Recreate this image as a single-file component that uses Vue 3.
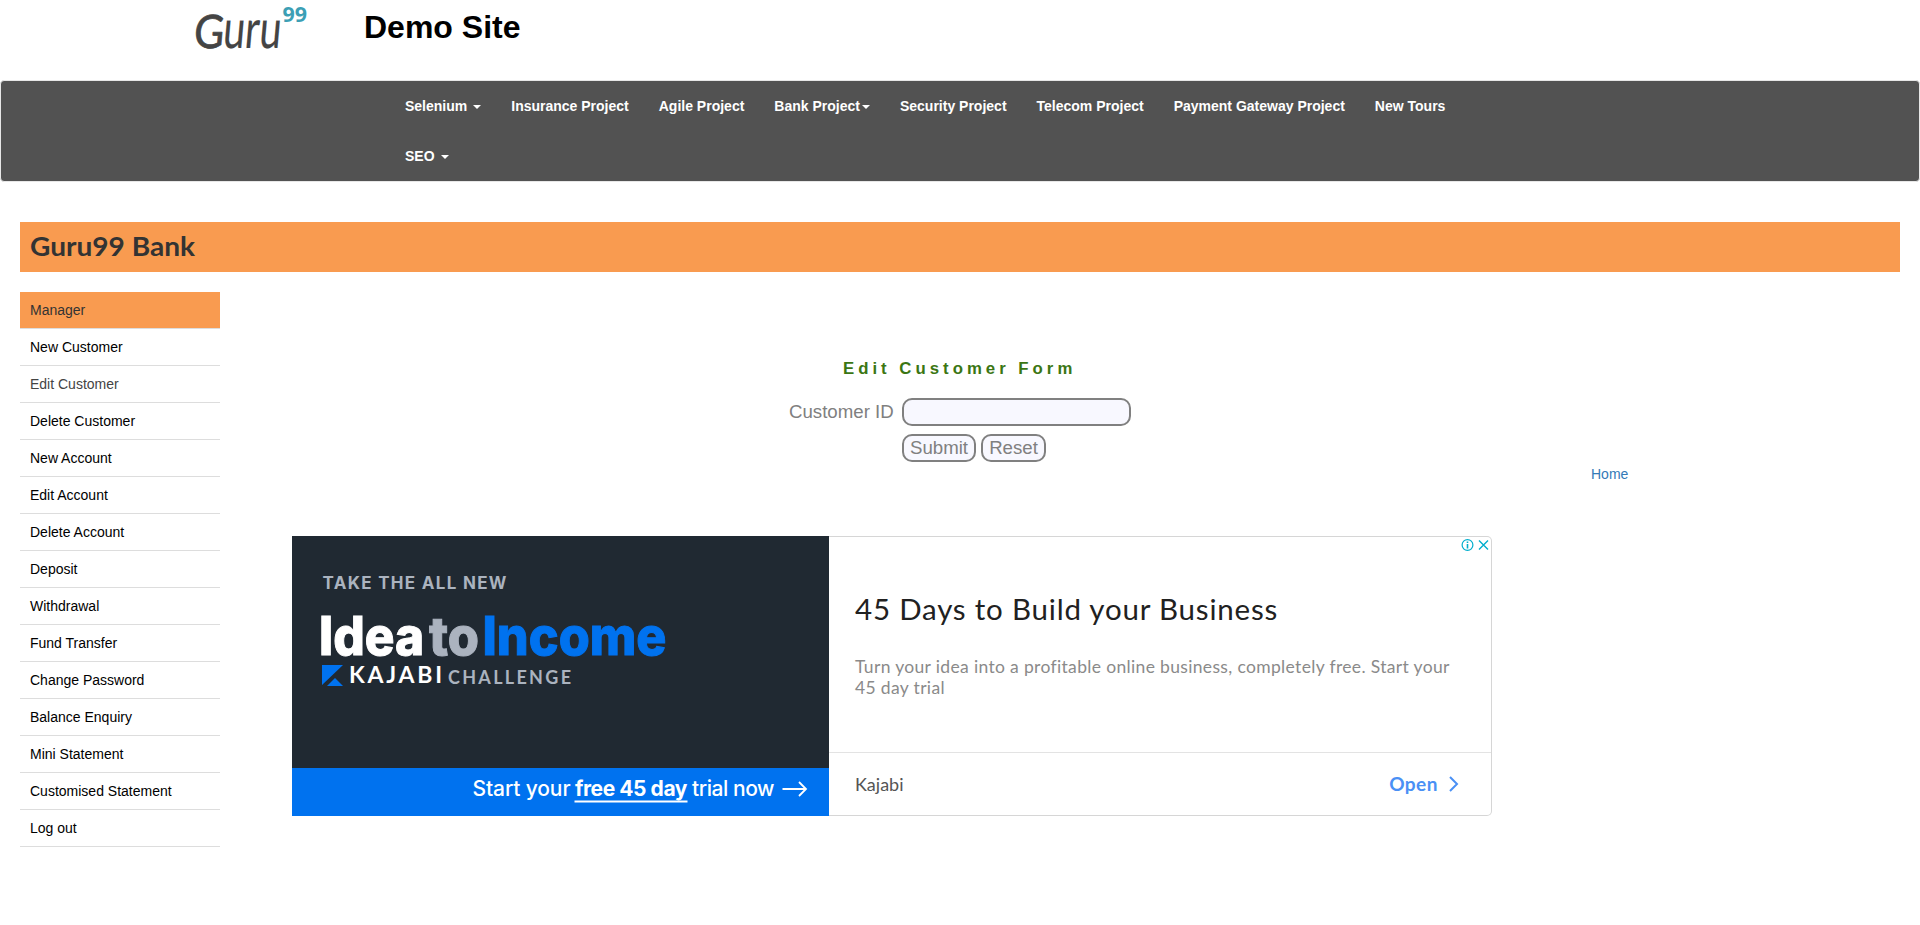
<script setup>
const nav = [
  { label: 'Selenium', caret: true, spaced: true },
  { label: 'Insurance Project' },
  { label: 'Agile Project' },
  { label: 'Bank Project', caret: true },
  { label: 'Security Project' },
  { label: 'Telecom Project' },
  { label: 'Payment Gateway Project' },
  { label: 'New Tours' },
  { label: 'SEO', caret: true, spaced: true },
]
const menu = [
  'Manager', 'New Customer', 'Edit Customer', 'Delete Customer', 'New Account',
  'Edit Account', 'Delete Account', 'Deposit', 'Withdrawal', 'Fund Transfer',
  'Change Password', 'Balance Enquiry', 'Mini Statement', 'Customised Statement', 'Log out',
]
</script>

<template>
  <div class="page">
    <header class="top">
      <svg class="logo" width="120" height="62" viewBox="0 0 120 62" role="img" aria-label="Guru99">
        <g class="logo-name" transform="translate(1 48) skewX(-5)">
          <text class="cap" x="0" y="0" textLength="30" lengthAdjust="spacingAndGlyphs">G</text>
          <text class="low" x="29" y="0" textLength="58" lengthAdjust="spacingAndGlyphs">uru</text>
        </g>
        <text class="logo-num" x="90.500" y="22" textLength="24.500" lengthAdjust="spacingAndGlyphs">99</text>
      </svg>
      <h2 class="site-title">Demo Site</h2>
    </header>

    <nav class="navbar">
      <ul class="nav-list">
        <li v-for="n in nav" :key="n.label">
          <a>{{ n.label }}<b v-if="n.caret" class="caret" :class="{ spaced: n.spaced }"></b></a>
        </li>
      </ul>
    </nav>

    <div class="bank">
      <svg width="200" height="50" viewBox="0 0 200 50">
        <text class="bank-name" x="10" y="33.500" textLength="165" lengthAdjust="spacingAndGlyphs">Guru99 Bank</text>
      </svg>
    </div>

    <div class="body">
      <ul class="side">
        <li v-for="(m, i) in menu" :key="m" :class="{ active: i === 0, visited: i === 2 }"><a>{{ m }}</a></li>
      </ul>

      <main class="main">
        <form class="form" @submit.prevent>
          <p class="heading">Edit Customer Form</p>
          <div class="row">
            <label for="cid">Customer ID</label>
            <input id="cid" class="field" type="text" />
          </div>
          <div class="row buttons">
            <button class="btn submit" type="submit">Submit</button>
            <button class="btn reset" type="reset">Reset</button>
          </div>
        </form>
        <a class="home">Home</a>

        <section class="ad">
          <svg class="banner" width="537" height="280" viewBox="0 0 537 280">
            <rect width="537" height="280" fill="#202932" />
            <rect y="232" width="537" height="48" fill="#0072ef" />
            <text x="30.5" y="53" font-size="17" font-weight="700" fill="#abb3bf" textLength="184">TAKE THE ALL NEW</text>
            <g font-size="53" font-weight="800" stroke-width="1">
              <text x="27" y="119" fill="#fff" stroke="#fff" textLength="105" lengthAdjust="spacingAndGlyphs">Idea</text>
              <text x="137" y="119" fill="#abb3bf" stroke="#abb3bf" textLength="50" lengthAdjust="spacingAndGlyphs">to</text>
              <text x="190.500" y="119" fill="#0072ef" stroke="#0072ef" textLength="184" lengthAdjust="spacingAndGlyphs">Income</text>
            </g>
            <path d="M30 129h21L30 149zM35 150l8-8 8 8z" fill="#0072ef" />
            <text class="sans" x="57" y="147" font-size="23" font-weight="700" fill="#fff" textLength="93">KAJABI</text>
            <text class="sans" x="156" y="147.500" font-size="18" font-weight="700" fill="#abb3bf" textLength="123">CHALLENGE</text>
            <g font-size="21" fill="#fff">
              <text x="180.500" y="260" font-weight="500" textLength="98">Start your</text>
              <text x="283" y="260" font-weight="700" textLength="112.500">free 45 day</text>
              <text x="400" y="260" font-weight="500" textLength="82.500">trial now</text>
            </g>
            <path d="M282.500 265.500h113" stroke="#fff" stroke-width="2" />
            <path d="M490.500 253h23M507 246l7 7-7 7" fill="none" stroke="#fff" stroke-width="1.800" />
          </svg>
          <div class="card">
            <svg class="choices" width="30" height="14" viewBox="0 0 30 14" fill="none" stroke="#00aecd">
              <circle cx="7.500" cy="7" r="5.400" stroke-width="1.200" />
              <path d="M7.500 6v4.500M7.500 3.500v1.500" stroke-width="1.600" />
              <path d="M19 2.500l9 9M28 2.500l-9 9" stroke-width="1.400" />
            </svg>
            <div class="copy">
              <h3><span>45 Days to Build your Business</span></h3>
              <p>Turn your idea into a profitable online business, completely free. Start your<br />45 day trial</p>
            </div>
            <div class="foot">
              <span class="brand">Kajabi</span>
              <span class="open">Open
                <svg width="12" height="18" viewBox="0 0 12 18" fill="none" stroke="#4a90f5" stroke-width="2"><path d="M2 2l7 7-7 7" /></svg>
              </span>
            </div>
          </div>
        </section>
      </main>
    </div>
  </div>
</template>

<style>
body { background: #fff; overflow: hidden; }
</style>

<style scoped>
* { box-sizing: border-box; }
.page { font: 14px/20px "Liberation Sans", Arial, sans-serif; color: #333; height: 925px; overflow: hidden; }
.top { height: 80px; display: flex; align-items: flex-start; padding-left: 192px; }
.logo { flex: none; overflow: visible; }
.logo-name { font-family: "Lato", sans-serif; fill: #444; stroke: #444; stroke-linejoin: round; }
.logo-name .cap { font-size: 46px; stroke-width: .8; }
.logo-name .low { font-size: 54px; stroke-width: .2; }
.logo-num { font: 700 21px "Open Sans", sans-serif; fill: #3c9fb5; }
.site-title { margin: 9px 0 0 52px; font-size: 32px; line-height: 36px; font-weight: 700; color: #000; }
.navbar { height: 102px; border: 1px solid #e7e7e7; border-radius: 4px; background: #525252; }
.nav-list { list-style: none; margin: 0 auto; padding: 0; width: 1140px; display: flex; flex-wrap: wrap; }
.nav-list a { display: block; padding: 15px; line-height: 20px; font-weight: 700; color: #fff; }
.caret { display: inline-block; vertical-align: middle; margin-left: 2px; border-top: 4px solid; border-left: 4px solid transparent; border-right: 4px solid transparent; }
.caret.spaced { margin-left: 6px; }
.bank { height: 50px; margin: 40px 20px 20px; background: #f99b50; }
.bank svg { display: block; }
.bank-name { font: 700 27px "Lato", sans-serif; fill: #333; }
.body { display: flex; padding: 0 20px; }
.side { flex: none; width: 200px; list-style: none; margin: 0; padding: 0; }
.side li { height: 37px; padding: 8px 10px; border-bottom: 1px solid #ddd; color: #000; }
.side .active { background: #f99b50; color: #333; }
.side .visited { color: #444; }
.main { flex: 1; display: flex; flex-direction: column; }
.form { width: 342px; margin: 67px 0 0 569px; color: #808080; }
.heading { margin: 0 0 29px 54px; font-size: 16.8px; line-height: 20px; font-weight: 700; letter-spacing: 4px; color: #3b7613; white-space: nowrap; }
.row { display: flex; align-items: center; justify-content: space-between; height: 28px; margin-top: -10px; font-size: 18.667px; }
.field, .btn { height: 28px; margin: 0; border: 2px solid #808080; border-radius: 10px; background: #f8f8ff; }
.field { width: 229px; }
.buttons { justify-content: flex-start; gap: 5px; margin-top: 8px; padding-left: 113px; }
.btn { padding: 0; font: 18.667px/22px "Liberation Sans", Arial, sans-serif; color: #808080; text-align: center; }
.submit { width: 74px; }
.reset { width: 65px; }
.home { margin: 2px 0 0 1371px; color: #337ab7; }
.ad { display: flex; width: 1200px; height: 280px; margin: 52px 0 0 72px; }
.banner { flex: none; display: block; font-family: Inter, sans-serif; }
.banner .sans { font-family: "Lato", sans-serif; }
.card { position: relative; flex: 1; display: flex; flex-direction: column; border: 1px solid #d6d6d6; border-left: 0; border-radius: 0 5px 5px 0; font-family: "Lato", sans-serif; }
.choices { position: absolute; top: 1px; right: 1px; background: #fff; }
.copy { height: 216px; padding: 52px 0 0 26px; border-bottom: 1px solid #e3e3e3; white-space: nowrap; }
.copy h3 { margin: 0; font-size: 29.500px; line-height: 40px; font-weight: 400; color: #212121; letter-spacing: .8px; }
.copy p { margin: 27px 0 0; font-size: 17.500px; line-height: 21px; color: #8a8a8a; letter-spacing: .34px; }
.foot { flex: 1; display: flex; align-items: center; justify-content: space-between; padding: 0 31px 0 26px; font-size: 18px; color: #555; }
.open { display: flex; align-items: center; gap: 10px; font-weight: 700; font-size: 19px; letter-spacing: .5px; color: #4a90f5; }
</style>
